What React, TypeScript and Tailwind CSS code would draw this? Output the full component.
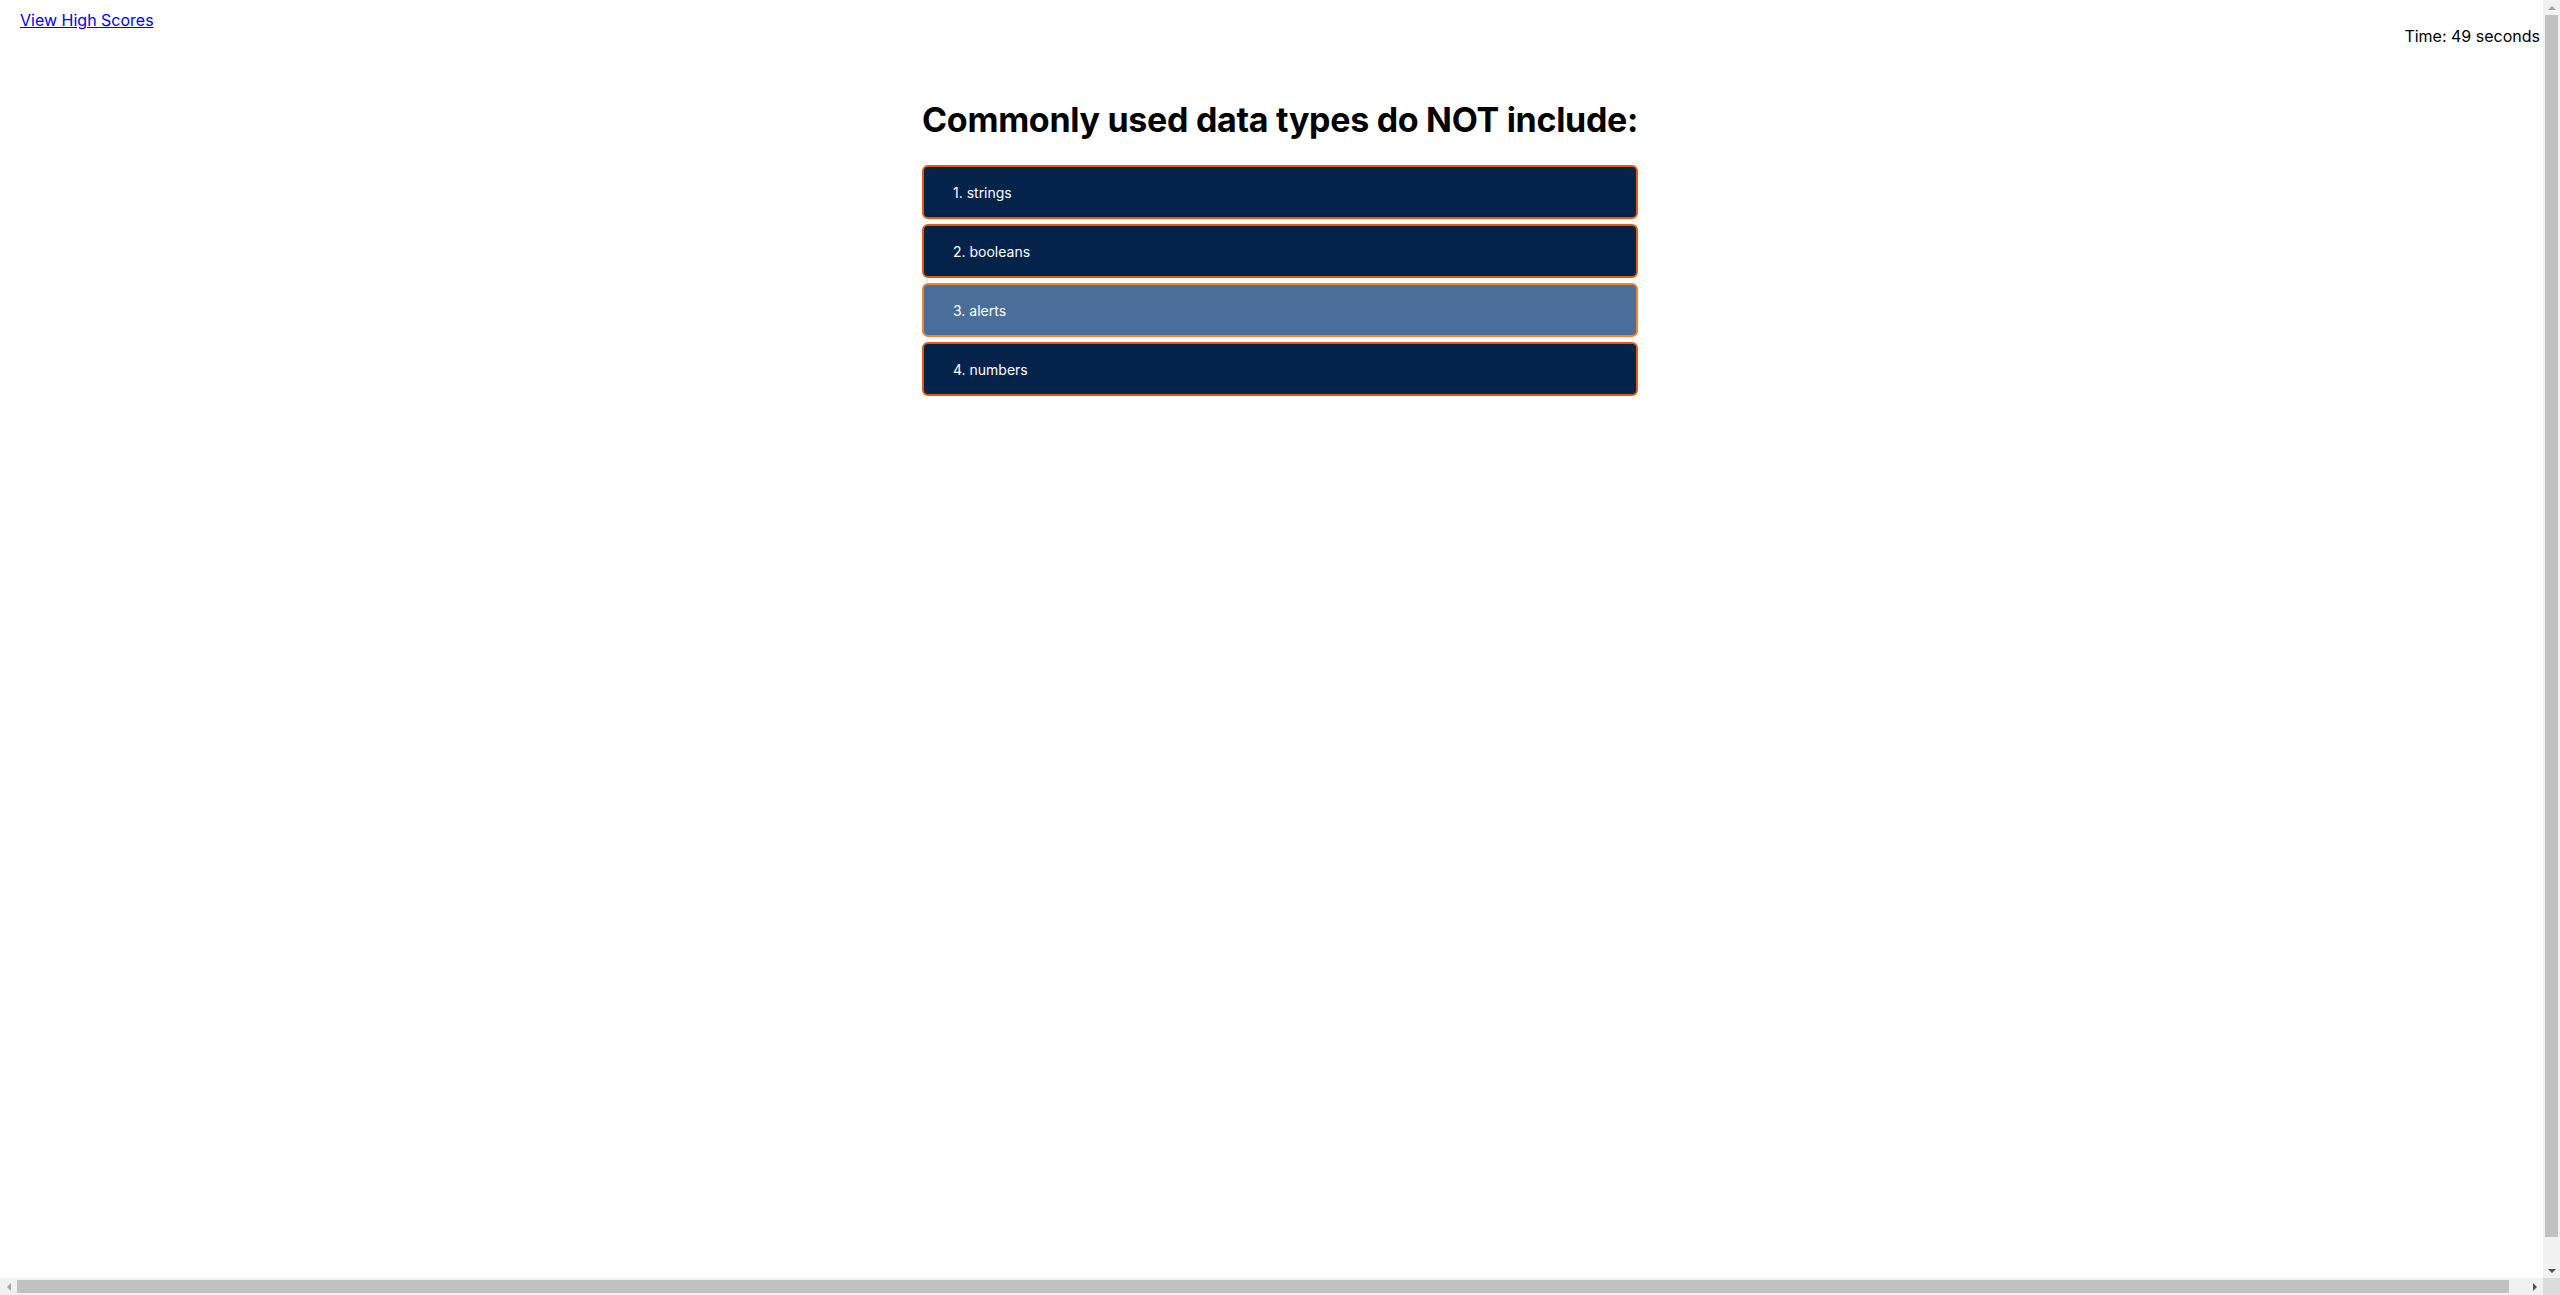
import React from "react";

const answers = ["1. strings", "2. booleans", "3. alerts", "4. numbers"];

function Tri({ dir, color }: { dir: "up" | "down" | "left" | "right"; color: string }) {
  const pts =
    dir === "up"
      ? "0,6 4,2 8,6"
      : dir === "down"
      ? "0,2 8,2 4,6"
      : dir === "left"
      ? "6,0 6,8 2,4"
      : "2,0 2,8 6,4";
  return (
    <svg width="8" height="8" viewBox="0 0 8 8" className="block">
      <polygon points={pts} fill={color} />
    </svg>
  );
}

export default function App() {
  return (
    <div
      className="w-screen h-screen bg-white text-black flex flex-col overflow-hidden"
      style={{ fontFamily: "Inter, 'Noto Sans', sans-serif" }}
    >
      <div className="flex flex-1 min-h-0">
        <div className="flex-1 min-w-0 overflow-hidden">
          <div className="w-screen">
            <header className="flex justify-between items-start pl-[20px] pr-[20px] pt-[8px]">
              <a href="#" className="text-[16px] leading-[24px] text-[#0000ee] underline">
                View High Scores
              </a>
              <span className="mt-[16px] text-[16px] leading-[24px] text-black">Time: 49 seconds</span>
            </header>
            <main className="flex flex-col items-center mt-[50px]">
              <div className="w-[716px]">
                <h1 className="text-[34px] leading-[44px] font-bold whitespace-nowrap tracking-[-0.3px]">
                  Commonly used data types do NOT include:
                </h1>
                <ul className="mt-[23px] flex flex-col gap-[5px]">
                  {answers.map((a, i) => (
                    <li key={a}>
                      <button
                        className={
                          i === 2
                            ? "w-full h-[54px] flex items-center pl-[29px] rounded-[6px] border-2 border-[#f5852d] bg-[#4a6d9a] text-white text-[14px] text-left"
                            : "w-full h-[54px] flex items-center pl-[29px] rounded-[6px] border-2 border-[#e45b0e] bg-[#03234b] text-white text-[14px] text-left"
                        }
                      >
                        {a}
                      </button>
                    </li>
                  ))}
                </ul>
              </div>
            </main>
          </div>
        </div>
        <div className="w-[17px] shrink-0 bg-[#f1f1f1] flex flex-col items-center">
          <div className="h-[15px] flex items-center justify-center">
            <Tri dir="up" color="#a3a3a3" />
          </div>
          <div className="flex-1 w-[13px] bg-[#c1c1c1] mb-[26px]" />
          <div className="h-[15px] flex items-center justify-center">
            <Tri dir="down" color="#505050" />
          </div>
        </div>
      </div>
      <div className="h-[17px] shrink-0 flex">
        <div className="flex-1 bg-[#f1f1f1] flex items-center">
          <div className="w-[17px] flex items-center justify-center">
            <Tri dir="left" color="#a3a3a3" />
          </div>
          <div className="flex-1 h-[13px] bg-[#c1c1c1] mr-[17px]" />
          <div className="w-[17px] flex items-center justify-center">
            <Tri dir="right" color="#505050" />
          </div>
        </div>
        <div className="w-[17px] bg-[#dcdcdc]" />
      </div>
    </div>
  );
}
